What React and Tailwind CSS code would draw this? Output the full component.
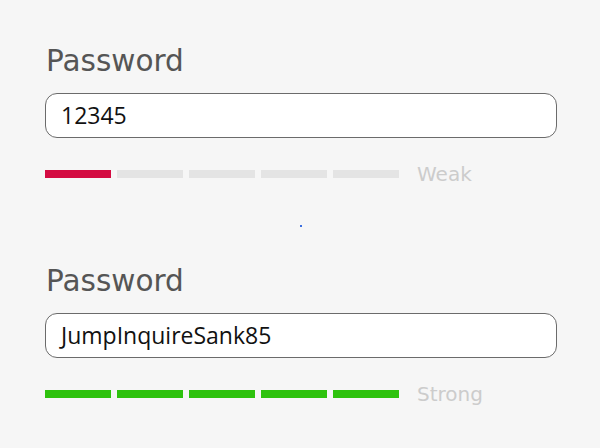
import React from 'react';

const BARS = [0, 1, 2, 3, 4];

function PasswordField({ value, filled, color, label }) {
  return (
    <div className="flex flex-col">
      <h2 className="text-[29.5px] leading-[34px] text-[#555555] font-['DejaVu_Sans',sans-serif] pl-[1px]">
        Password
      </h2>
      <div className="mt-[15px] w-[512px] h-[45px] rounded-[12px] border border-[#6b6b6b] bg-white flex items-center px-[15px]">
        <span className="text-[23px] text-[#111111] font-['Open_Sans',sans-serif]">{value}</span>
      </div>
      <div className="mt-[26px] h-[20px] flex items-center">
        <div className="flex gap-[6px]">
          {BARS.map((i) => (
            <div
              key={i}
              className={`w-[66px] h-[8px] ${i < filled ? color : 'bg-[#e4e4e4]'}`}
            />
          ))}
        </div>
        <span className="ml-[18px] text-[20px] leading-[20px] text-[#cccccc] font-['DejaVu_Sans',sans-serif]">
          {label}
        </span>
      </div>
    </div>
  );
}

export default function App() {
  return (
    <div className="w-[600px] h-[448px] bg-[#f6f6f6] pt-[44px] pl-[45px]">
      <PasswordField value="12345" filled={1} color="bg-[#d40c42]" label="Weak" />
      <div className="h-[80px] pt-[41px] pl-[255px]">
        <div className="w-[2px] h-[2px] bg-[#3b6fe0]" />
      </div>
      <PasswordField value="JumpInquireSank85" filled={5} color="bg-[#2ec20e]" label="Strong" />
    </div>
  );
}
